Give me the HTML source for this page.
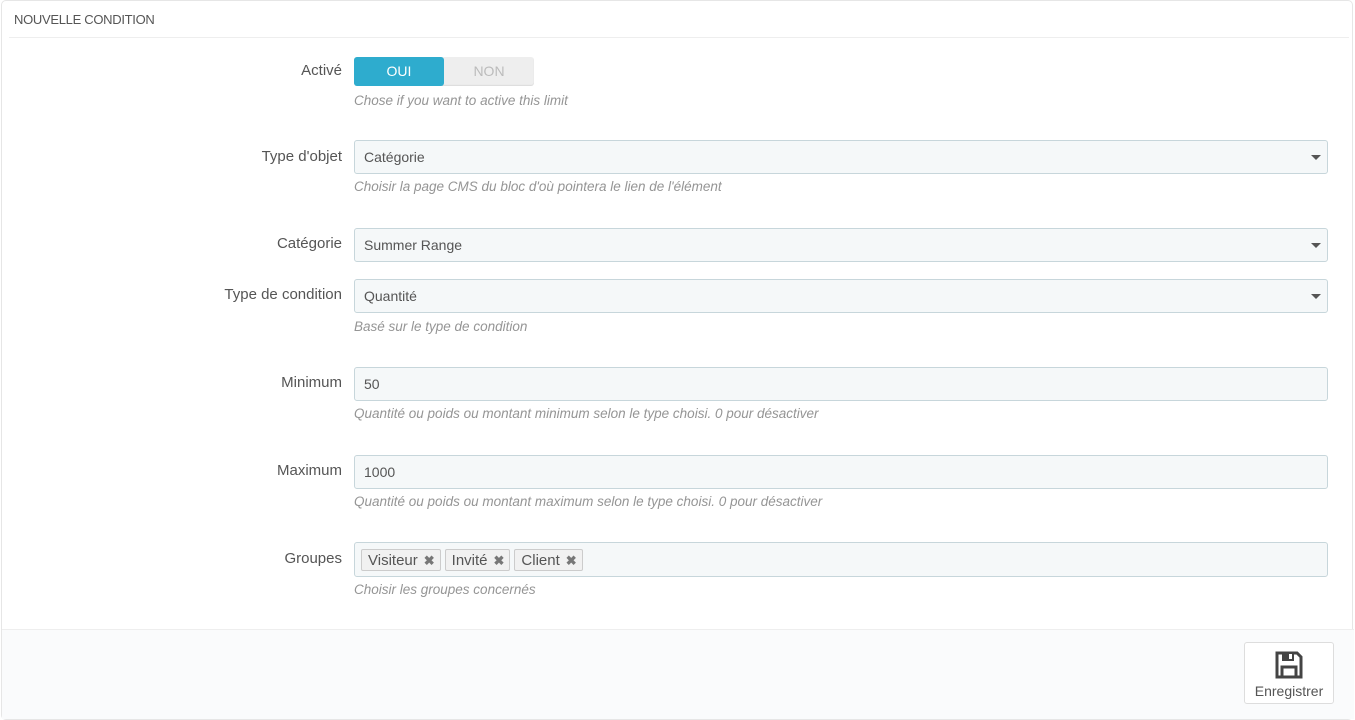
<!DOCTYPE html>
<html><head><meta charset="utf-8"><style>
*{box-sizing:border-box;margin:0;padding:0}
body{width:1355px;height:711px;background:#fff;font-family:"Liberation Sans",sans-serif;font-size:13px;color:#555;position:relative;overflow:hidden}
.panel{position:absolute;left:1px;top:0;width:1352px;height:720px;border:1px solid #e6e6e6;border-radius:5px;background:#fff}
.hd{position:absolute;left:7px;top:0;width:1340px;height:37px;border-bottom:1px solid #eee;font-size:13px;color:#555;padding:11px 0 0 5px;letter-spacing:-0.3px}
.lbl{position:absolute;right:1013px;font-size:15px;color:#555;text-align:right}
.help{position:absolute;left:354px;font-size:13.5px;font-style:italic;color:#959595}
.inp{position:absolute;left:354px;width:974px;height:34px;background:#f5f8f9;border:1px solid #c7d6db;border-radius:3px;padding:8px 0 0 9px;font-size:14px;color:#555}
.caret{position:absolute;right:6px;top:14px;width:0;height:0;border-left:5px solid transparent;border-right:5px solid transparent;border-top:5px solid #555}
.sw{position:absolute;left:354px;top:57px;width:180px;height:29px;border-radius:3px;background:#eee;box-shadow:inset 0 -1px 1px rgba(0,0,0,.08)}
.sw .on{position:absolute;left:0;top:0;width:90px;height:29px;background:#2eacce;border-radius:3px;color:#fff;text-align:center;line-height:29px;font-size:14px}
.sw .off{position:absolute;left:90px;top:0;width:90px;height:29px;color:#bbb;text-align:center;line-height:29px;font-size:14px}
.tag{display:inline-block;height:22px;border:1px solid #ccc;border-radius:2px;background:#f1f1f1;padding:2px 5px 0 6px;margin-right:4px;font-size:15px;color:#555;line-height:17px}
.tag b{color:#777;font-size:13px;margin-left:6px}
.ft{position:absolute;left:0;top:628px;width:1352px;height:90px;background:#fafbfc;border-top:1px solid #eee}
.btn{position:absolute;left:1244px;top:642px;width:90px;height:62px;border:1px solid #ddd;border-radius:3px;background:#fff;text-align:center;font-size:14px;color:#555}
</style></head><body>
<div class="panel">
<div class="hd">NOUVELLE CONDITION</div>
<div class="ft"></div>
</div>
<div class="lbl" style="top:62px">Activé</div>
<div class="sw"><div class="on">OUI</div><div class="off">NON</div></div>
<div class="help" style="top:93px">Chose if you want to active this limit</div>

<div class="lbl" style="top:148px">Type d'objet</div>
<div class="inp" style="top:140px">Catégorie<span class="caret"></span></div>
<div class="help" style="top:179px">Choisir la page CMS du bloc d'où pointera le lien de l'élément</div>

<div class="lbl" style="top:235px">Catégorie</div>
<div class="inp" style="top:228px">Summer Range<span class="caret"></span></div>

<div class="lbl" style="top:286px">Type de condition</div>
<div class="inp" style="top:279px">Quantité<span class="caret"></span></div>
<div class="help" style="top:319px">Basé sur le type de condition</div>

<div class="lbl" style="top:374px">Minimum</div>
<div class="inp" style="top:367px">50</div>
<div class="help" style="top:406px">Quantité ou poids ou montant minimum selon le type choisi. 0 pour désactiver</div>

<div class="lbl" style="top:462px">Maximum</div>
<div class="inp" style="top:455px">1000</div>
<div class="help" style="top:494px">Quantité ou poids ou montant maximum selon le type choisi. 0 pour désactiver</div>

<div class="lbl" style="top:550px">Groupes</div>
<div class="inp" style="top:542px;height:35px;padding:6px 0 0 6px"><span class="tag">Visiteur<b>✖</b></span><span class="tag">Invité<b>✖</b></span><span class="tag">Client<b>✖</b></span></div>
<div class="help" style="top:582px">Choisir les groupes concernés</div>

<div class="btn">
<svg width="30" height="30" viewBox="0 0 30 30" style="margin-top:7px"><path d="M3 3h20l4 4v20H3z" fill="none" stroke="#444" stroke-width="3"/><rect x="8" y="3" width="12" height="8" fill="#444"/><rect x="15" y="4" width="3" height="5" fill="#fff"/><rect x="8" y="17" width="14" height="10" fill="none" stroke="#444" stroke-width="3"/></svg>
<div>Enregistrer</div>
</div>
</body></html>
